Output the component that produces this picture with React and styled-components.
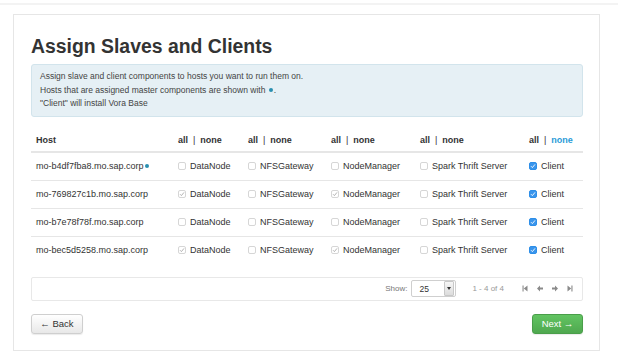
import React from "react";
import styled, { createGlobalStyle } from "styled-components";

const Global = createGlobalStyle`
  html, body { margin: 0; padding: 0; background: #fff; }
  body { font-family: "Liberation Sans", Arial, Helvetica, sans-serif; color: #333; }
`;

const TopBand = styled.div`
  margin-top: 3px;
  height: 2px;
  background: #f3f3f3;
`;

const Card = styled.div`
  margin: 9px 0 0 13px;
  width: 587px;
  height: 337px;
  border: 1px solid #e6e6e6;
  padding: 0 16px 0 17px;
  box-sizing: border-box;
  display: flex;
  flex-direction: column;
`;

const Title = styled.h2`
  margin: 19px 0 0 0;
  font-size: 19.4px;
  line-height: 24px;
  font-weight: bold;
  color: #333;
`;

const Info = styled.div`
  margin-top: 6px;
  background: #e6f0f5;
  border: 1px solid #d2e4ec;
  border-radius: 3px;
  padding: 5px 8px;
  font-size: 8.5px;
  line-height: 13.5px;
  color: #444;
`;

const Dot = styled.span`
  display: inline-block;
  width: 4px;
  height: 4px;
  border-radius: 50%;
  background: #2a8fb0;
  margin: 0 1px 1px 1px;
  vertical-align: middle;
`;

const Table = styled.div`
  margin-top: 13px;
  display: grid;
  grid-template-columns: 143px 70px 83px 89px 109px 58px;
`;

const HeadCell = styled.div`
  height: 21px;
  display: flex;
  align-items: center;
  padding-left: ${(p) => p.$pad || 4}px;
  font-size: 9px;
  font-weight: bold;
  color: #333;
  border-bottom: 2px solid #e6e6e6;
`;

const Sep = styled.span`
  margin: 0 5px;
  font-weight: normal;
  color: #333;
`;

const LinkText = styled.span`
  color: ${(p) => (p.$active ? "#2a9bd8" : "#333")};
`;

const Cell = styled.div`
  height: 27px;
  display: flex;
  align-items: center;
  padding-left: ${(p) => p.$pad || 4}px;
  font-size: 9px;
  color: #333;
  border-bottom: ${(p) => (p.$last ? "none" : "1px solid #e6e6e6")};
`;

const Box = styled.span`
  width: 8px;
  height: 8px;
  border-radius: 2px;
  box-sizing: border-box;
  border: 1px solid ${(p) => (p.$blue ? "#2d8ee8" : "#d6d6d6")};
  background: ${(p) => (p.$blue ? "#3a95ec" : "#fff")};
  margin-right: 4px;
  display: inline-flex;
  align-items: center;
  justify-content: center;
  flex: none;
`;

const Check = ({ color }) => (
  <svg width="6" height="6" viewBox="0 0 6 6">
    <path d="M1 3.2 L2.4 4.6 L5 1.4" fill="none" stroke={color} strokeWidth="0.9" />
  </svg>
);

const CheckBox = ({ state }) => {
  if (state === "blue")
    return (
      <Box $blue>
        <Check color="#fff" />
      </Box>
    );
  return <Box>{state === "grey" && <Check color="#aaa" />}</Box>;
};

const Pager = styled.div`
  margin-top: 13px;
  height: 24px;
  box-sizing: border-box;
  border: 1px solid #e8e8e8;
  border-radius: 2px;
  display: flex;
  align-items: center;
  justify-content: flex-end;
  padding-right: 9px;
  font-size: 8px;
  color: #777;
`;

const ShowLabel = styled.span`
  margin-right: 4px;
`;

const Select = styled.div`
  width: 45px;
  height: 17px;
  border: 1px solid #cfcfcf;
  border-radius: 2px;
  box-sizing: border-box;
  display: flex;
  align-items: center;
  justify-content: space-between;
  padding-left: 7px;
  color: #333;
  font-size: 8.5px;
  background: #fff;
`;

const SelBtn = styled.span`
  width: 8px;
  height: 13px;
  margin-right: 1px;
  background: linear-gradient(#f6f6f6, #dcdcdc);
  border: 1px solid #c8c8c8;
  border-radius: 1px;
  display: flex;
  align-items: center;
  justify-content: center;
`;

const Range = styled.span`
  margin: 0 18px 0 16px;
  color: #999;
`;

const Icons = styled.div`
  display: flex;
  gap: 9px;
  align-items: center;
`;

const Icon = ({ d }) => (
  <svg width="6" height="7" viewBox="0 0 6 7">
    <path d={d} fill="#8a8a8a" />
  </svg>
);

const Footer = styled.div`
  margin-top: 13px;
  display: flex;
  justify-content: space-between;
`;

const Button = styled.div`
  height: 20px;
  box-sizing: border-box;
  border-radius: 3px;
  font-size: 9.5px;
  display: flex;
  align-items: center;
  justify-content: center;
  width: ${(p) => p.$w}px;
  color: ${(p) => (p.$primary ? "#fff" : "#333")};
  background: ${(p) =>
    p.$primary
      ? "linear-gradient(#62c462, #4fa84f)"
      : "linear-gradient(#ffffff, #e8e8e8)"};
  border: 1px solid ${(p) => (p.$primary ? "#4a9e4a" : "#cfcfcf")};
  box-shadow: 0 1px 1px rgba(0,0,0,0.08);
`;

const hosts = [
  { name: "mo-b4df7fba8.mo.sap.corp", master: true, dn: false, nm: false },
  { name: "mo-769827c1b.mo.sap.corp", dn: true, nm: true },
  { name: "mo-b7e78f78f.mo.sap.corp", dn: false, nm: false },
  { name: "mo-bec5d5258.mo.sap.corp", dn: true, nm: true },
];

const AllNone = ({ activeNone }) => (
  <>
    <span>all</span>
    <Sep>|</Sep>
    <LinkText $active={activeNone}>none</LinkText>
  </>
);

export default function App() {
  return (
    <>
      <Global />
      <TopBand />
      <Card>
        <Title>Assign Slaves and Clients</Title>
        <Info>
          Assign slave and client components to hosts you want to run them on.
          <br />
          Hosts that are assigned master components are shown with <Dot />.
          <br />
          "Client" will install Vora Base
        </Info>
        <Table>
          <HeadCell $pad={5}>Host</HeadCell>
          <HeadCell><AllNone /></HeadCell>
          <HeadCell><AllNone /></HeadCell>
          <HeadCell><AllNone /></HeadCell>
          <HeadCell><AllNone /></HeadCell>
          <HeadCell><AllNone activeNone /></HeadCell>
          {hosts.map((h, i) => {
            const last = i === hosts.length - 1;
            return (
              <React.Fragment key={h.name}>
                <Cell $pad={5} $last={last}>
                  {h.name}
                  {h.master && <Dot />}
                </Cell>
                <Cell $last={last}>
                  <CheckBox state={h.dn ? "grey" : "off"} />
                  DataNode
                </Cell>
                <Cell $last={last}>
                  <CheckBox state="off" />
                  NFSGateway
                </Cell>
                <Cell $last={last}>
                  <CheckBox state={h.nm ? "grey" : "off"} />
                  NodeManager
                </Cell>
                <Cell $last={last}>
                  <CheckBox state="off" />
                  Spark Thrift Server
                </Cell>
                <Cell $last={last}>
                  <CheckBox state="blue" />
                  Client
                </Cell>
              </React.Fragment>
            );
          })}
        </Table>
        <Pager>
          <ShowLabel>Show:</ShowLabel>
          <Select>
            25
            <SelBtn>
              <svg width="4" height="3" viewBox="0 0 4 3">
                <path d="M0 0 H4 L2 3 Z" fill="#333" />
              </svg>
            </SelBtn>
          </Select>
          <Range>1 - 4 of 4</Range>
          <Icons>
            <Icon d="M0.5 0.5 H1.6 V6.5 H0.5 Z M5.5 0.5 V6.5 L1.8 3.5 Z" />
            <Icon d="M0 3.5 L3 0.5 V2.5 H6 V4.5 H3 V6.5 Z" />
            <Icon d="M6 3.5 L3 0.5 V2.5 H0 V4.5 H3 V6.5 Z" />
            <Icon d="M5.5 0.5 H4.4 V6.5 H5.5 Z M0.5 0.5 V6.5 L4.2 3.5 Z" />
          </Icons>
        </Pager>
        <Footer>
          <Button $w={52}>← Back</Button>
          <Button $w={51} $primary>Next →</Button>
        </Footer>
      </Card>
    </>
  );
}
